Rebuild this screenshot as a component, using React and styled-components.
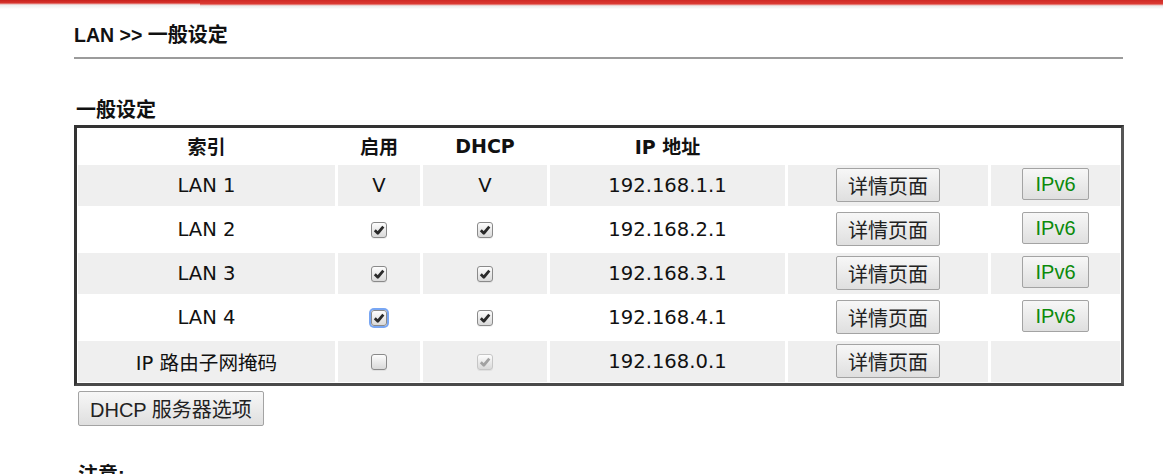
import React from 'react';
import styled, { createGlobalStyle } from 'styled-components';

const GlobalStyle = createGlobalStyle`
  body {
    margin: 0;
    background: #fff;
    color: #111;
    font-family: "DejaVu Sans", "Noto Sans CJK SC", sans-serif;
  }
`;

const TopBar = styled.div`
  display: flex;
  height: 9px;
  .left {
    flex-basis: 200px;
    background: linear-gradient(#c9211c 0, #d7352f 3px, #e9a7a4 4px, #eeeeee 5px, #f6f6f6 7px, #fff 9px);
  }
  .right {
    flex-grow: 1;
    background: linear-gradient(#d02a25 0, #dc3c35 4px, #ecb4b1 5px, #ededed 6px, #f7f7f7 8px, #fff 9px);
  }
`;

const Page = styled.div`
  margin-left: 74px;
  width: 1050px;
`;

const Title = styled.div`
  padding: 14px 0 10px;
  width: 1049px;
  border-bottom: 2px solid #9b9b9b;
  font-family: "Liberation Sans", "Noto Sans CJK SC", sans-serif;
  font-weight: bold;
  font-size: 19.5px;
  line-height: 24px;
  color: #111;
  span {
    font-size: 20px;
  }
`;

const SectionTitle = styled.div`
  margin: 39px 0 3px 2px;
  font-family: "Liberation Sans", "Noto Sans CJK SC", sans-serif;
  font-weight: bold;
  font-size: 20px;
  line-height: 24px;
`;

const Table = styled.div`
  display: flex;
  flex-direction: column;
  gap: 3px;
  padding: 1px;
  border: 3px solid;
  border-color: #333 #565656 #4a4a4a #333;
`;

const Row = styled.div`
  display: grid;
  grid-template-columns: 257px 82px 124px 235px 200px 1fr;
  gap: 3px;
  height: ${p => (p.$head ? '33px' : '41px')};
`;

const Cell = styled.div`
  display: flex;
  align-items: ${p => (p.$top ? 'flex-start' : 'center')};
  justify-content: center;
  padding-top: ${p => (p.$top ? '3px' : '0')};
  background: ${p => (p.$shade ? '#efefef' : 'transparent')};
  font-size: ${p => (p.$head ? '19px' : '19.6px')};
  font-weight: ${p => (p.$head ? 'bold' : 'normal')};
  color: #111;
  white-space: nowrap;
`;

const Box = styled.span`
  display: inline-flex;
  align-items: center;
  justify-content: center;
  box-sizing: border-box;
  width: 16px;
  height: 16px;
  border: 1px solid ${p => (p.$disabled ? '#c6c6c6' : '#8a8a8a')};
  border-radius: 3px;
  background: linear-gradient(#fdfdfd, #d9d9d9);
  box-shadow: ${p => (p.$focus ? '0 0 0 2px #78a6f3' : '0 1px 0 rgba(0, 0, 0, 0.06)')};
  color: ${p => (p.$disabled ? '#a2a2a2' : '#2a2a2a')};
  svg {
    width: 12px;
    height: 12px;
  }
`;

const Button = styled.button`
  box-sizing: border-box;
  height: ${p => (p.$short ? '32px' : '34px')};
  padding: 0 ${p => (p.$short ? '12px' : '11px')};
  border: 1px solid #a3a3a3;
  border-radius: 2px;
  background: linear-gradient(#f7f7f7, #dfdfdf);
  font-family: "Liberation Sans", "Noto Sans CJK SC", sans-serif;
  font-size: 20px;
  color: ${p => p.$color || '#222'};
  cursor: pointer;
`;

const Footer = styled.div`
  margin: 5px 0 0 4px;
  ${Button} {
    height: 35px;
    padding: 0 11px;
  }
`;

const Note = styled.div`
  margin: 37px 0 0 4px;
  font-family: "Liberation Sans", "Noto Sans CJK SC", sans-serif;
  font-weight: bold;
  font-size: 20px;
  line-height: 24px;
`;

const Check = ({ value, disabled, focus }) => {
  if (value === 'V') return 'V';
  return (
    <Box $disabled={disabled} $focus={focus}>
      {value && (
        <svg viewBox="0 0 10 10">
          <path d="M1.5 5.2 L4 7.7 L8.6 2.2" fill="none" stroke="currentColor" strokeWidth="2.3" strokeLinejoin="round" />
        </svg>
      )}
    </Box>
  );
};

const lans = [
  { name: 'LAN 1', enable: 'V', dhcp: 'V', ip: '192.168.1.1', ipv6: true },
  { name: 'LAN 2', enable: true, dhcp: true, ip: '192.168.2.1', ipv6: true },
  { name: 'LAN 3', enable: true, dhcp: true, ip: '192.168.3.1', ipv6: true },
  { name: 'LAN 4', enable: true, dhcp: true, ip: '192.168.4.1', ipv6: true, focus: true },
  { name: 'IP 路由子网掩码', enable: false, dhcp: true, dhcpDisabled: true, ip: '192.168.0.1', ipv6: false },
];

export default function App() {
  return (
    <>
      <GlobalStyle />
      <TopBar>
        <div className="left" />
        <div className="right" />
      </TopBar>
      <Page>
        <Title>LAN &gt;&gt; <span>一般设定</span></Title>
        <SectionTitle>一般设定</SectionTitle>
        <Table>
          <Row $head>
            <Cell $head>索引</Cell>
            <Cell $head>启用</Cell>
            <Cell $head>DHCP</Cell>
            <Cell $head>IP 地址</Cell>
            <Cell $head />
            <Cell $head />
          </Row>
          {lans.map((lan, i) => {
            const shade = i % 2 === 0;
            return (
              <Row key={lan.name}>
                <Cell $shade={shade}>{lan.name}</Cell>
                <Cell $shade={shade}>
                  <Check value={lan.enable} focus={lan.focus} />
                </Cell>
                <Cell $shade={shade}>
                  <Check value={lan.dhcp} disabled={lan.dhcpDisabled} />
                </Cell>
                <Cell $shade={shade}>{lan.ip}</Cell>
                <Cell $shade={shade} $top>
                  <Button>详情页面</Button>
                </Cell>
                <Cell $shade={shade} $top>
                  {lan.ipv6 && <Button $short $color="#0b8a0b">IPv6</Button>}
                </Cell>
              </Row>
            );
          })}
        </Table>
        <Footer>
          <Button>DHCP 服务器选项</Button>
        </Footer>
        <Note>注意:</Note>
      </Page>
    </>
  );
}
